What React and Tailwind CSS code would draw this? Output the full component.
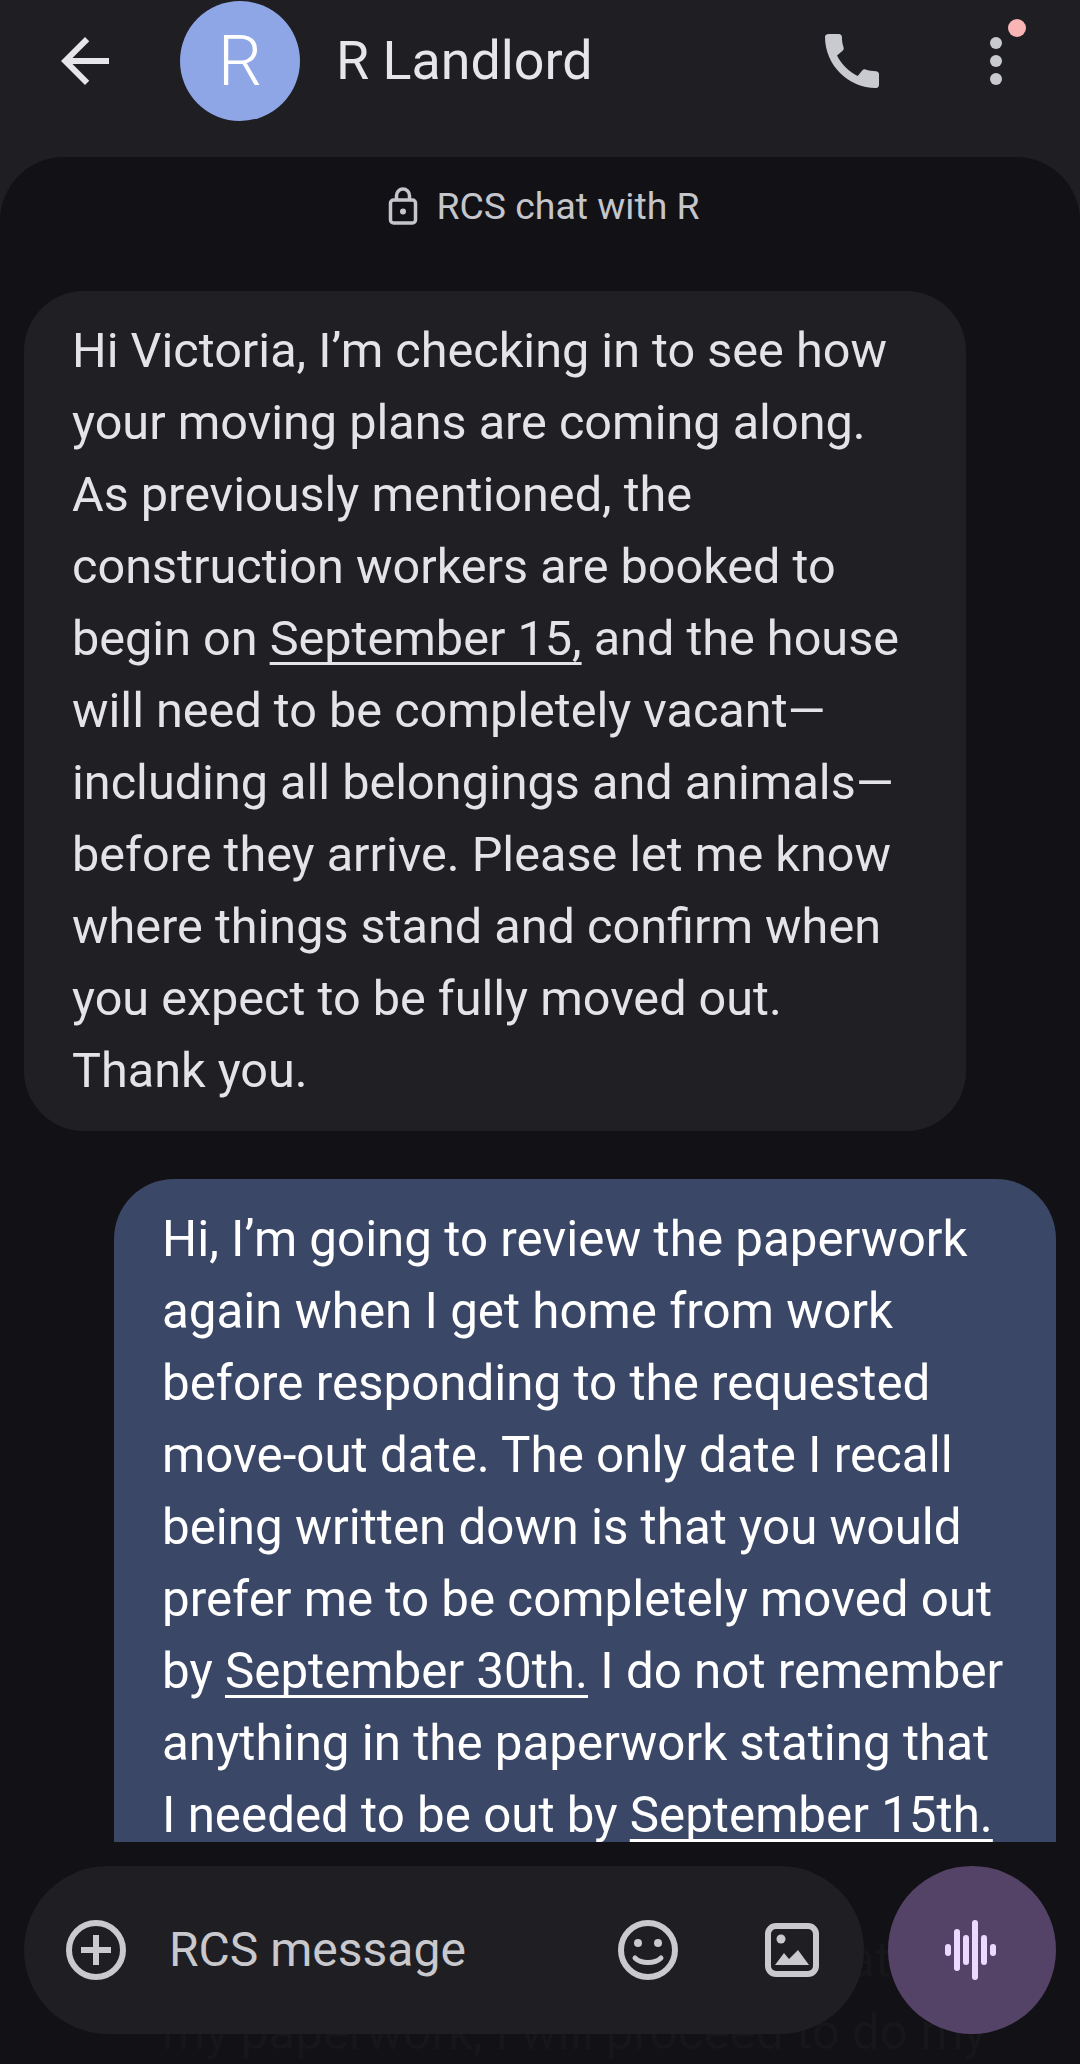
const LANDLORD_LINES = [
  "Hi Victoria, I’m checking in to see how",
  "your moving plans are coming along.",
  "As previously mentioned, the",
  "construction workers are booked to",
  <>begin on <Date>September 15,</Date> and the house</>,
  "will need to be completely vacant—",
  "including all belongings and animals—",
  "before they arrive. Please let me know",
  "where things stand and confirm when",
  "you expect to be fully moved out.",
  "Thank you.",
];

const REPLY_LINES = [
  "Hi, I’m going to review the paperwork",
  "again when I get home from work",
  "before responding to the requested",
  "move-out date. The only date I recall",
  "being written down is that you would",
  "prefer me to be completely moved out",
  <>by <Date>September 30th.</Date> I do not remember</>,
  "anything in the paperwork stating that",
  <>I needed to be out by <Date>September 15th.</Date></>,
];

// x offset and half height of each bar in the voice button
const WAVE_BARS = [
  { x: 6, h: 6 },
  { x: 15, h: 21 },
  { x: 24, h: 15 },
  { x: 33, h: 30 },
  { x: 42, h: 15 },
  { x: 51, h: 6 },
];

function Date({ children }) {
  return (
    <span className="underline decoration-[3px] underline-offset-[7px] [text-decoration-skip-ink:none]">
      {children}
    </span>
  );
}

function Bubble({ lines, className }) {
  return (
    <div className={`w-[942px] shrink-0 px-12 py-6 leading-[72px] whitespace-nowrap ${className}`}>
      {lines.map((line, i) => (
        <div key={i}>{line}</div>
      ))}
    </div>
  );
}

function BackIcon() {
  return (
    <svg width="72" height="72" viewBox="0 0 24 24" fill="#e6e6ea">
      <path d="M20 11H7.83l5.59-5.59L12 4l-8 8 8 8 1.41-1.41L7.83 13H20v-2z" />
    </svg>
  );
}

function PhoneIcon() {
  return (
    <svg width="72" height="72" viewBox="0 0 24 24" fill="#c9cacf">
      <path d="M20.01 15.38c-1.23 0-2.42-.2-3.53-.56-.35-.12-.74-.03-1.01.24l-1.57 1.97c-2.83-1.35-5.48-3.9-6.89-6.83l1.95-1.66c.27-.28.35-.67.24-1.02-.37-1.11-.56-2.3-.56-3.53 0-.54-.45-.99-.99-.99H4.19C3.65 3 3 3.24 3 3.99 3 13.28 10.73 21 20.01 21c.71 0 .99-.63.99-1.18v-3.45c0-.54-.45-.99-.99-.99z" />
    </svg>
  );
}

function LockIcon() {
  return (
    <svg width="30" height="38" viewBox="0 0 30 38" fill="none" stroke="#c5c6cb" strokeWidth="3.5">
      <rect x="2.5" y="13" width="25" height="23" rx="3" />
      <path d="M8.5 13V8.5a6.5 6.5 0 0 1 13 0V13" />
      <circle cx="15" cy="24.5" r="3" fill="#c5c6cb" stroke="none" />
    </svg>
  );
}

function PlusCircleIcon() {
  return (
    <svg width="60" height="60" viewBox="0 0 60 60" fill="none" stroke="#cacace" strokeWidth="6">
      <circle cx="30" cy="30" r="27" />
      <path d="M15 30h30M30 15v30" />
    </svg>
  );
}

function SmileIcon() {
  return (
    <svg width="60" height="60" viewBox="0 0 60 60" fill="none" stroke="#cacace" strokeWidth="6">
      <circle cx="30" cy="30" r="27" />
      <circle cx="20" cy="23" r="4" fill="#cacace" stroke="none" />
      <circle cx="40" cy="23" r="4" fill="#cacace" stroke="none" />
      <path d="M17 38c6 6 20 6 26 0" strokeWidth="5" strokeLinecap="round" />
    </svg>
  );
}

function ImageIcon() {
  return (
    <svg width="54" height="54" viewBox="0 0 54 54" fill="none">
      <rect x="3" y="3" width="48" height="48" rx="8" stroke="#cacace" strokeWidth="6" />
      <circle cx="16" cy="16" r="4.5" fill="#cacace" />
      <path d="M10 42l9-12 5 6 9-9 11 15z" fill="#cacace" />
    </svg>
  );
}

function WaveIcon() {
  return (
    <svg width="60" height="60" viewBox="0 0 60 60" fill="#ecd9ff">
      {WAVE_BARS.map((bar) => (
        <rect key={bar.x} x={bar.x - 3} y={30 - bar.h} width="6" height={bar.h * 2} rx="3" />
      ))}
    </svg>
  );
}

export default function App() {
  return (
    <div className="relative w-[1080px] h-[2064px] flex flex-col overflow-hidden bg-[#1e1e23] font-['Roboto',sans-serif]">
      {/* Header */}
      <header className="h-[157px] shrink-0 flex items-start">
        <div className="ml-[49px] mt-[25px]">
          <BackIcon />
        </div>
        <div className="ml-[59px] mt-px w-[120px] h-[120px] rounded-full bg-[#8ea6e6] flex items-center justify-center text-[70px] font-light text-white">
          R
        </div>
        <div className="ml-[36px] mt-[25px] text-[53.8px] leading-[72px] text-[#e6e6ea]">R Landlord</div>
        <div className="ml-auto mt-[25px] mr-[192px]">
          <PhoneIcon />
        </div>
      </header>

      {/* Conversation */}
      <main className="flex-1 min-h-0 flex flex-col rounded-t-[64px] bg-[#121216] overflow-hidden">
        <div className="h-[134px] shrink-0 pb-[36px] pl-2 flex items-center justify-center gap-[18px] text-[37.4px] text-[#c5c6cb]">
          <LockIcon />
          <span>RCS chat with R</span>
        </div>

        <div className="flex-1 min-h-0 overflow-hidden flex flex-col gap-[48px] px-6">
          <Bubble lines={LANDLORD_LINES} className="self-start rounded-[60px] bg-[#1f1f24] text-[48.6px] text-[#e4e4e8]" />
          <Bubble lines={REPLY_LINES} className="self-end rounded-t-[60px] bg-[#3b4767] text-[49.3px] text-white" />
        </div>

        {/* Composer */}
        <footer className="relative h-[222px] shrink-0 flex gap-6 px-6 pt-6">
          <div className="absolute left-[162px] top-[154px] text-[49.3px] leading-[72px] text-[#17171b] whitespace-nowrap">
            my paperwork, I will proceed to do my
          </div>
          <div className="absolute left-[848px] top-[82px] text-[49.3px] leading-[72px] text-[#17171b]">at</div>

          <div className="relative h-[168px] w-[840px] rounded-full bg-[#1e1e23] flex items-center pl-[42px]">
            <PlusCircleIcon />
            <span className="ml-[43px] text-[48px] text-[#c8c8cd]">RCS message</span>
            <div className="ml-auto mr-[45px] flex items-center gap-[87px]">
              <SmileIcon />
              <ImageIcon />
            </div>
          </div>
          <div className="relative h-[168px] w-[168px] rounded-full bg-[#544267] flex items-center justify-center">
            <WaveIcon />
          </div>
        </footer>
      </main>

      {/* Overflow menu */}
      <div className="absolute left-[990px] top-[37px] flex flex-col gap-1.5">
        <span className="w-3 h-3 rounded-full bg-[#c9cacf]" />
        <span className="w-3 h-3 rounded-full bg-[#c9cacf]" />
        <span className="w-3 h-3 rounded-full bg-[#c9cacf]" />
      </div>
      <span className="absolute left-[1008px] top-[19px] w-[18px] h-[18px] rounded-full bg-[#f9b5b5]" />
    </div>
  );
}
